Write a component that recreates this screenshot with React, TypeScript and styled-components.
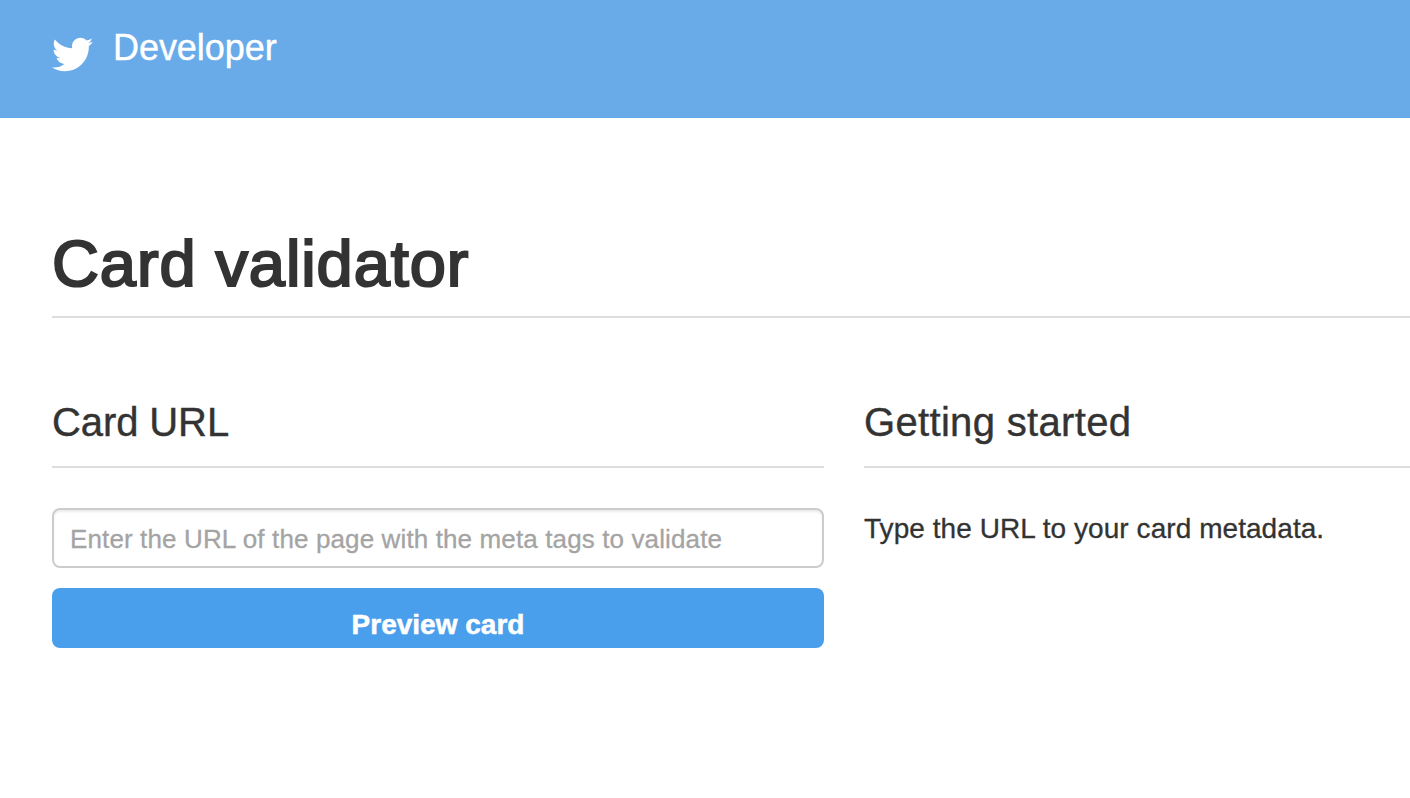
import styled, { createGlobalStyle } from "styled-components";
import { FaTwitter } from "react-icons/fa";

const GlobalStyle = createGlobalStyle`
  * {
    box-sizing: border-box;
  }

  body {
    margin: 0;
    background: #fff;
    color: #333;
    font-family: "Liberation Sans", Arial, sans-serif;
    font-size: 28px;
    overflow: hidden;
  }
`;

const Header = styled.header`
  display: flex;
  align-items: flex-start;
  height: 118px;
  padding: 28px 52px 0;
  background: #69aae8;
  color: #fff;
`;

const Bird = styled(FaTwitter)`
  width: 41px;
  height: 41px;
  margin-top: 6px;
`;

const Brand = styled.span`
  margin-left: 20px;
  font-size: 36px;
  line-height: 40px;
  letter-spacing: -0.05px;
  -webkit-text-stroke: 0.4px currentColor;
`;

const Main = styled.main`
  padding: 110px 0 0 52px;
`;

const Title = styled.h1`
  height: 90px;
  margin: 0;
  border-bottom: 2px solid #ddd;
  font-size: 65px;
  font-weight: 400;
  line-height: 72px;
  letter-spacing: 0.9px;
  white-space: nowrap;
  -webkit-text-stroke: 2.2px currentColor;
`;

const Columns = styled.div`
  display: grid;
  grid-template-columns: 772px 1fr;
  column-gap: 40px;
  margin-top: 80px;
`;

const Heading = styled.h2<{ $tracking?: number }>`
  height: 70px;
  margin: 0 0 40px;
  border-bottom: 2px solid #ddd;
  font-size: 40px;
  font-weight: 400;
  line-height: 48px;
  letter-spacing: ${(props) => props.$tracking ?? 0}px;
  -webkit-text-stroke: 0.4px currentColor;
`;

const UrlInput = styled.input`
  display: block;
  width: 100%;
  height: 60px;
  padding: 2px 16px 0;
  border: 2px solid #ccc;
  border-radius: 8px;
  box-shadow: inset 0 2px 2px rgba(0, 0, 0, 0.075);
  font-family: inherit;
  font-size: 26px;
  letter-spacing: 0.125px;

  &::placeholder {
    color: #a4a4a4;
    opacity: 1;
    -webkit-text-stroke: 0.3px currentColor;
  }
`;

const PreviewButton = styled.button`
  display: block;
  width: 100%;
  height: 60px;
  margin-top: 20px;
  padding: 14px 0 0;
  border: 0;
  border-radius: 8px;
  background: #4a9fec;
  color: #fff;
  font-family: inherit;
  font-size: 28px;
  font-weight: 700;
  -webkit-text-stroke: 0.5px currentColor;
`;

const Hint = styled.p`
  margin: 0;
  font-size: 28px;
  line-height: 42px;
  letter-spacing: 0.06px;
  -webkit-text-stroke: 0.3px currentColor;
`;

export default function App() {
  return (
    <>
      <GlobalStyle />
      <Header>
        <Bird />
        <Brand>Developer</Brand>
      </Header>
      <Main>
        <Title>Card validator</Title>
        <Columns>
          <section>
            <Heading $tracking={-0.1}>Card URL</Heading>
            <UrlInput placeholder="Enter the URL of the page with the meta tags to validate" />
            <PreviewButton>Preview card</PreviewButton>
          </section>
          <section>
            <Heading $tracking={0.33}>Getting started</Heading>
            <Hint>Type the URL to your card metadata.</Hint>
          </section>
        </Columns>
      </Main>
    </>
  );
}
